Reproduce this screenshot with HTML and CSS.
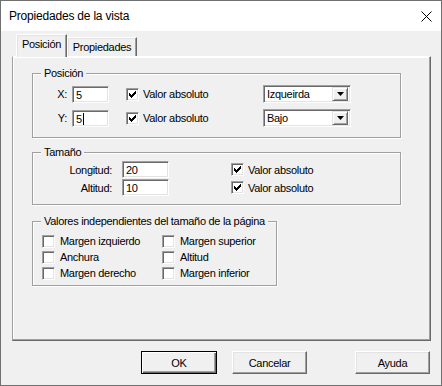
FILE: index.html
```html
<!DOCTYPE html>
<html lang="es">
<head>
<meta charset="utf-8">
<title>Propiedades de la vista</title>
<link rel="stylesheet" href="styles.css">
</head>
<body>
<div class="dialog">
  <div class="titlebar">
    <span class="title">Propiedades de la vista</span>
    <svg class="close" width="11" height="11" viewBox="0 0 11 11"><path d="M0.5 0.5L10.5 10.5M10.5 0.5L0.5 10.5" stroke="#000" stroke-width="1" fill="none"/></svg>
  </div>
  <div class="client">
    <div class="tabs">
      <div class="tab active">Posición</div>
      <div class="tab">Propiedades</div>
    </div>
    <div class="panel">
      <div class="group g-pos">
        <div class="group-title">Posición</div>
        <div class="pos-rows">
          <div class="pos-row">
            <span class="lbl">X:</span>
            <div class="edit e-pos">5</div>
            <div class="check c-pos"><span class="box"><svg width="7" height="7" viewBox="0 0 7 7"><path d="M0 2h1v1h1v1h1v-1h1v-1h1v-1h1v-1h1v3h-1v1h-1v1h-1v1h-1v1h-1v-1h-1v-1h-1z" fill="#000"/></svg></span><span>Valor absoluto</span></div>
            <div class="combo"><span class="combo-text">Izqueirda</span><span class="drop"><svg width="7" height="4" viewBox="0 0 7 4"><path d="M0 0h7L3.5 4z" fill="#000"/></svg></span></div>
          </div>
          <div class="pos-row">
            <span class="lbl">Y:</span>
            <div class="edit e-pos">5<span class="caret"></span></div>
            <div class="check c-pos"><span class="box"><svg width="7" height="7" viewBox="0 0 7 7"><path d="M0 2h1v1h1v1h1v-1h1v-1h1v-1h1v-1h1v3h-1v1h-1v1h-1v1h-1v1h-1v-1h-1v-1h-1z" fill="#000"/></svg></span><span>Valor absoluto</span></div>
            <div class="combo"><span class="combo-text">Bajo</span><span class="drop"><svg width="7" height="4" viewBox="0 0 7 4"><path d="M0 0h7L3.5 4z" fill="#000"/></svg></span></div>
          </div>
        </div>
      </div>
      <div class="group g-size">
        <div class="group-title">Tamaño</div>
        <div class="size-rows">
          <div class="size-row">
            <span class="lbl lbl-size">Longitud:</span>
            <div class="edit e-size">20</div>
            <div class="check c-size"><span class="box"><svg width="7" height="7" viewBox="0 0 7 7"><path d="M0 2h1v1h1v1h1v-1h1v-1h1v-1h1v-1h1v3h-1v1h-1v1h-1v1h-1v1h-1v-1h-1v-1h-1z" fill="#000"/></svg></span><span>Valor absoluto</span></div>
          </div>
          <div class="size-row">
            <span class="lbl lbl-size">Altitud:</span>
            <div class="edit e-size">10</div>
            <div class="check c-size"><span class="box"><svg width="7" height="7" viewBox="0 0 7 7"><path d="M0 2h1v1h1v1h1v-1h1v-1h1v-1h1v-1h1v3h-1v1h-1v1h-1v1h-1v1h-1v-1h-1v-1h-1z" fill="#000"/></svg></span><span>Valor absoluto</span></div>
          </div>
        </div>
      </div>
      <div class="group g-ind">
        <div class="group-title">Valores independientes del tamaño de la página</div>
        <div class="ind-grid">
          <div class="check"><span class="box"></span><span>Margen izquierdo</span></div>
          <div class="check"><span class="box"></span><span>Margen superior</span></div>
          <div class="check"><span class="box"></span><span>Anchura</span></div>
          <div class="check"><span class="box"></span><span>Altitud</span></div>
          <div class="check"><span class="box"></span><span>Margen derecho</span></div>
          <div class="check"><span class="box"></span><span>Margen inferior</span></div>
        </div>
      </div>
    </div>
    <div class="buttons">
      <div class="btn default">OK</div>
      <div class="btn btn-cancel">Cancelar</div>
      <div class="btn btn-help">Ayuda</div>
    </div>
  </div>
</div>
</body>
</html>
```
FILE: styles.css
```css
* {
  box-sizing: border-box;
}

body {
  margin: 0;
  background: #f0f0f0;
  font-family: "Liberation Sans", Arial, sans-serif;
  font-size: 11px;
  line-height: 14px;
  letter-spacing: -0.3px;
  color: #000;
  white-space: nowrap;
}

.dialog {
  width: 442px;
  height: 386px;
  border: 1px solid #707070;
  background: #f0f0f0;
  display: flex;
  flex-direction: column;
}

.titlebar {
  height: 30px;
  flex: none;
  background: #fff;
  display: flex;
  align-items: center;
  justify-content: space-between;
  padding: 0 9px 0 8px;
}

.title {
  font-size: 12px;
  letter-spacing: -0.2px;
  color: #000;
}

.close {
  display: block;
}

.client {
  flex: 1;
  padding: 3px 0 0 11px;
}

.tabs {
  display: flex;
  align-items: flex-end;
  height: 22px;
  padding-left: 4px;
}

.tab {
  height: 19px;
  width: 70px;
  padding-top: 2px;
  text-align: center;
  border-top: 1px solid #fff;
  border-left: 1px solid #fff;
  border-right: 1px solid #696969;
  box-shadow: inset -1px 0 #a0a0a0, inset 1px 1px #e3e3e3;
  background: #f0f0f0;
}

.tab.active {
  height: 23px;
  width: 51px;
  margin-bottom: -1px;
  position: relative;
  z-index: 1;
}

.panel {
  width: 419px;
  height: 285px;
  border: 1px solid;
  border-color: #fff #696969 #696969 #a0a0a0;
  box-shadow: inset -1px -1px #a0a0a0, inset 1px 1px #fff;
  padding: 16px 0 0 19px;
}

.group {
  width: 369px;
  border: 1px solid #a0a0a0;
  box-shadow: inset 1px 1px #fff, 1px 1px #fff;
}

.group-title {
  width: fit-content;
  margin: -8px 0 0 8px;
  padding: 0 3px;
  background: #f0f0f0;
  line-height: 14px;
}

.g-pos {
  height: 65px;
}

.g-size {
  height: 53px;
  margin-top: 14px;
}

.g-ind {
  width: 245px;
  height: 65px;
  margin-top: 16px;
}

.pos-rows {
  margin-top: 5px;
  display: flex;
  flex-direction: column;
  gap: 6px;
}

.pos-row,
.size-row {
  display: flex;
  align-items: center;
  height: 18px;
}

.size-rows {
  margin-top: 2px;
  display: flex;
  flex-direction: column;
  gap: 1px;
}

.size-row {
  height: 17px;
}

.lbl {
  width: 34px;
  text-align: right;
}

.lbl-size {
  width: 79px;
}

.edit {
  height: 17px;
  background: #fff;
  border: 1px solid;
  border-color: #a0a0a0 #fff #fff #a0a0a0;
  box-shadow: inset 1px 1px #696969, inset -1px -1px #e3e3e3;
  padding: 1px 0 0 3px;
  display: flex;
  align-items: center;
}

.e-pos {
  width: 37px;
  margin-left: 5px;
}

.e-size {
  width: 47px;
  margin-left: 10px;
}

.caret {
  width: 1px;
  height: 12px;
  background: #000;
  margin-left: 1px;
}

.check {
  display: flex;
  align-items: center;
  gap: 4px;
}

.c-pos {
  margin-left: 17px;
  width: 137px;
}

.c-size {
  margin-left: 62px;
}

.box {
  width: 13px;
  height: 13px;
  flex: none;
  background: #fff;
  border: 1px solid;
  border-color: #a0a0a0 #fff #fff #a0a0a0;
  box-shadow: inset 1px 1px #696969, inset -1px -1px #e3e3e3;
  display: flex;
  align-items: center;
  justify-content: center;
}

.combo {
  width: 88px;
  height: 18px;
  background: #fff;
  border: 1px solid;
  border-color: #a0a0a0 #fff #fff #a0a0a0;
  box-shadow: inset 1px 1px #696969, inset -1px -1px #e3e3e3;
  display: flex;
  align-items: center;
  justify-content: space-between;
  padding: 2px 2px 2px 3px;
}

.drop {
  width: 16px;
  height: 14px;
  background: #f0f0f0;
  border: 1px solid;
  border-color: #e3e3e3 #696969 #696969 #e3e3e3;
  box-shadow: inset 1px 1px #fff, inset -1px -1px #a0a0a0;
  display: flex;
  align-items: center;
  justify-content: center;
}

.ind-grid {
  margin-top: 5px;
  padding-left: 9px;
  display: grid;
  grid-template-columns: 120px 1fr;
  grid-auto-rows: 16px;
}

.ind-grid .check {
  gap: 5px;
}

.buttons {
  display: flex;
  margin-top: 10px;
  padding-left: 129px;
}

.btn {
  width: 75px;
  height: 23px;
  display: flex;
  align-items: center;
  justify-content: center;
  border: 1px solid;
  border-color: #fff #696969 #696969 #fff;
  box-shadow: inset -1px -1px #a0a0a0, inset 1px 1px #e3e3e3;
  background: #f0f0f0;
}

.btn.default {
  width: 76px;
  border-color: #000;
  box-shadow: inset 1px 1px #fff, inset -1px -1px #696969, inset -2px -2px #a0a0a0;
}

.btn-cancel {
  margin-left: 15px;
}

.btn-help {
  margin-left: 48px;
}
```
